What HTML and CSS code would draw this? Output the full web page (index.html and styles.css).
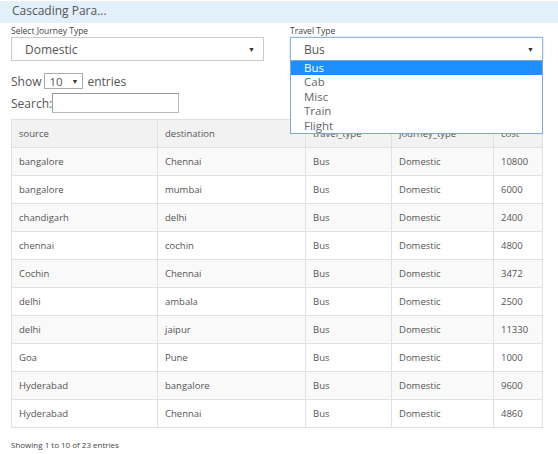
FILE: index.html
```html
<!DOCTYPE html>
<html>
<head>
<meta charset="utf-8">
<link rel="stylesheet" href="styles.css">
</head>
<body>
<div class="topbar">Cascading Para...</div>
<div class="filters">
  <div class="field">
    <div class="label">Select Journey Type</div>
    <div class="select"><span>Domestic</span><span class="arrow">▼</span></div>
  </div>
  <div class="field">
    <div class="label">Travel Type</div>
    <div class="select focused"><span>Bus</span><span class="arrow">▼</span>
      <ul class="dropdown">
        <li class="active">Bus</li>
        <li>Cab</li>
        <li>Misc</li>
        <li>Train</li>
        <li>Flight</li>
      </ul>
    </div>
  </div>
</div>
<div class="controls">
  <div class="show">Show <span class="mini-select">10<span class="arrow">▼</span></span> entries</div>
  <div class="search">Search:<span class="input"></span></div>
</div>
<table class="grid">
  <colgroup><col class="c1"><col class="c2"><col class="c3"><col class="c4"><col class="c5"></colgroup>
  <thead><tr><th>source</th><th>destination</th><th>travel_type</th><th>journey_type</th><th>cost</th></tr></thead>
  <tbody>
    <tr><td>bangalore</td><td>Chennai</td><td>Bus</td><td>Domestic</td><td>10800</td></tr>
    <tr><td>bangalore</td><td>mumbai</td><td>Bus</td><td>Domestic</td><td>6000</td></tr>
    <tr><td>chandigarh</td><td>delhi</td><td>Bus</td><td>Domestic</td><td>2400</td></tr>
    <tr><td>chennai</td><td>cochin</td><td>Bus</td><td>Domestic</td><td>4800</td></tr>
    <tr><td>Cochin</td><td>Chennai</td><td>Bus</td><td>Domestic</td><td>3472</td></tr>
    <tr><td>delhi</td><td>ambala</td><td>Bus</td><td>Domestic</td><td>2500</td></tr>
    <tr><td>delhi</td><td>jaipur</td><td>Bus</td><td>Domestic</td><td>11330</td></tr>
    <tr><td>Goa</td><td>Pune</td><td>Bus</td><td>Domestic</td><td>1000</td></tr>
    <tr><td>Hyderabad</td><td>bangalore</td><td>Bus</td><td>Domestic</td><td>9600</td></tr>
    <tr><td>Hyderabad</td><td>Chennai</td><td>Bus</td><td>Domestic</td><td>4860</td></tr>
  </tbody>
</table>
<div class="info">Showing 1 to 10 of 23 entries</div>
</body>
</html>
```
FILE: styles.css
```css
* { box-sizing: border-box; }
body {
  margin: 0;
  font-family: "Open Sans", "Noto Sans", sans-serif;
  color: #555;
  background: #fff;
  width: 558px;
}
.topbar {
  margin-top: 1px;
  height: 22px;
  line-height: 19px;
  background: #e1f0f9;
  padding-left: 12px;
  font-size: 12px;
  color: #555;
}
.filters {
  display: grid;
  grid-template-columns: 253px 253px;
  column-gap: 26px;
  padding: 0 11px;
  margin-top: 1px;
}
.label {
  font-size: 8.5px;
  line-height: 13px;
  color: #444;
}
.select {
  position: relative;
  height: 24px;
  border: 1px solid #ccc;
  display: flex;
  align-items: center;
  justify-content: space-between;
  padding: 0 8px 0 13px;
  font-size: 12px;
  color: #555;
}
.select.focused { border-color: #8fb6e2; box-shadow: 0 0 2px rgba(100,150,220,0.4); }
.arrow { font-size: 7px; color: #333; }
.dropdown {
  position: absolute;
  top: 22px;
  left: -1px;
  right: -1px;
  margin: 0;
  padding: 0;
  list-style: none;
  background: #fff;
  border: 1px solid #7fa7d6;
  z-index: 5;
}
.dropdown li {
  height: 14.4px;
  line-height: 14.4px;
  padding-left: 13px;
  font-size: 11.5px;
  color: #666;
}
.dropdown li.active { background: #1e8fff; color: #fff; }
.controls {
  padding: 0 11px;
  margin-top: 11px;
  font-size: 12px;
}
.show { display: flex; align-items: center; height: 18px; }
.mini-select {
  display: inline-flex;
  align-items: center;
  justify-content: space-between;
  width: 39px;
  height: 16px;
  border: 1px solid #aaa;
  margin: 0 4px 0 3px;
  padding: 0 4px 0 4px;
  font-size: 11.5px;
}
.search { display: flex; align-items: center; margin-top: 2px; height: 22px; }
.input {
  display: inline-block;
  width: 127px;
  height: 20px;
  border: 1px solid #bbb;
  border-top-color: #999;
  border-left-color: #999;
}
.grid {
  margin: 5px 0 0 11px;
  border-collapse: collapse;
  width: 531px;
  table-layout: fixed;
  font-size: 9.5px;
  color: #555;
}
.c1 { width: 146px; } .c2 { width: 148px; } .c3 { width: 86px; } .c4 { width: 102px; } .c5 { width: 49px; }
.grid th, .grid td {
  border: 1px solid #e1e1e1;
  height: 28px;
  padding: 0 7px;
  text-align: left;
  font-weight: normal;
  white-space: nowrap;
  overflow: hidden;
}
.grid th { background: #f2f2f2; }
.grid tbody tr:nth-child(odd) td { background: #f9f9f9; }
.info {
  margin: 11px 0 0 11px;
  font-size: 8px;
  color: #444;
}
```
